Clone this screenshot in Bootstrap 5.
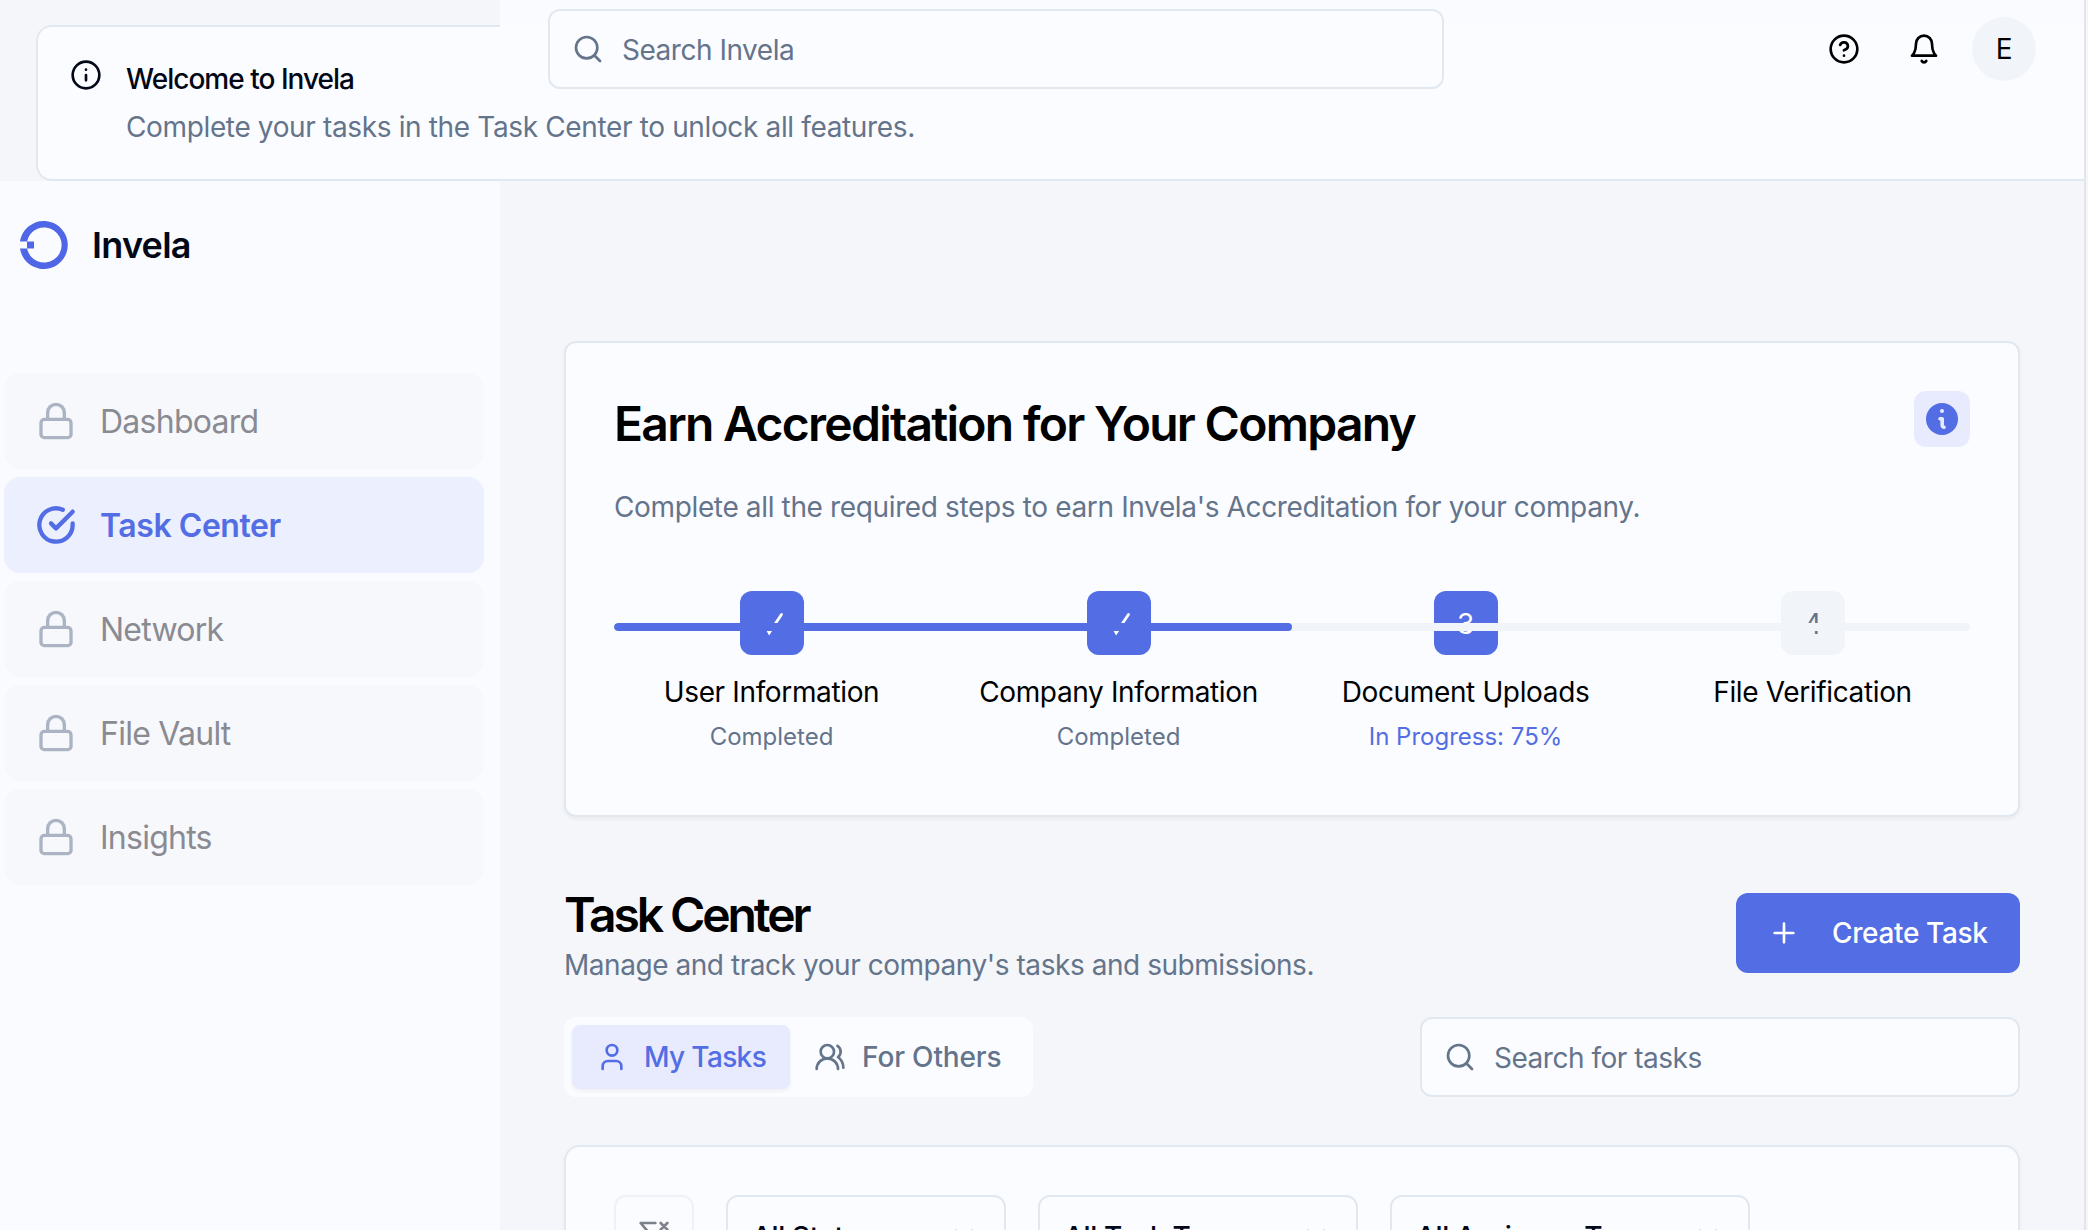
<!DOCTYPE html>
<html lang="en">
<head>
<meta charset="utf-8">
<title>Invela</title>
<link href="https://cdn.jsdelivr.net/npm/bootstrap@5.3.0/dist/css/bootstrap.min.css" rel="stylesheet">
<style>
:root{--brand:#536de4;--ink:#020817;--soft:#64748b;--line:#e2e8f0;--panel:#fbfcff;--page:#f5f6fa}
body{font-family:Inter,sans-serif;font-size:28px;line-height:40px;letter-spacing:-.36px;background:var(--page);color:#000;height:1230px;overflow:hidden;position:relative}
svg{flex:none;display:block}
.ic{width:32px;height:32px;fill:none;stroke:currentColor;stroke-width:2;stroke-linecap:round;stroke-linejoin:round}
.ic-lg{width:40px;height:40px}
.soft{color:var(--soft)}
.frame{width:2086px;height:1230px;overflow:hidden;border-right:2px solid #e5e5e7}
.notice-row{height:181px;padding:25px 0 0 36px}
.notice{height:156px;border:2px solid var(--line);border-right:0;border-radius:16px 0 0 16px;background:var(--panel);padding:32px 32px 0;gap:24px}
.notice h2{font-size:28px;font-weight:500;letter-spacing:-.98px;line-height:28px;color:var(--ink);margin:6px 0 14px}
.topbar{position:absolute;left:500px;top:0;width:1584px;height:98px;background:linear-gradient(#fafbff 25px,#fbfcff 25px);padding:9px 48px 0}
.field{height:80px;border:2px solid var(--line);border-radius:12px;background:var(--panel);padding:0 22px;gap:18px;letter-spacing:-.48px}
.field span{padding-top:2px}
.field.top{width:896px}
.field.tasks{width:600px}
.topicons{height:80px;gap:48px;color:#000}
.avatar{width:64px;height:64px;background:#f1f5f9;margin-left:-16px}
.side{width:500px;height:1049px;background:#fafbff;padding:36px 16px 0 4px}
.brandrow{gap:24px}
.brandname{font-size:36px;font-weight:600;color:var(--ink);letter-spacing:-.75px}
.nav-box{gap:8px;margin-top:100px}
.item{height:96px;border-radius:16px;background:#f7f8fc;padding:0 32px;gap:24px;font-size:32px;letter-spacing:-.75px;color:#8a8b92}
.item span{padding-top:2px}
.item svg{color:#abb4c3}
.item.on{background:#ebeffe;color:var(--brand);font-weight:600;letter-spacing:-.45px}
.item.on svg{color:var(--brand);stroke-width:2.6}
.content{width:1584px;padding:160px 64px 0}
.panel{border:2px solid var(--line);background:var(--panel);box-shadow:0 2px 4px rgba(0,0,0,.05)}
.accr{height:476px;border-radius:12px;padding:48px}
.accr h1{padding-top:5px}
.accr-desc{margin-top:35px}
.big{font-size:48px;line-height:56px;font-weight:600;letter-spacing:-1.72px;margin:0}
.big.tight{letter-spacing:-3.1px}
.tip{width:56px;height:56px;border-radius:12px;background:#e8ebfd}
.steps{gap:32px;margin-top:64px}
.track{position:absolute;left:0;right:0;top:32px;height:8px;border-radius:4px;background:#f1f5f9;overflow:hidden}
.track div{height:8px;border-radius:4px;background:var(--brand)}
.stp{flex:1 1 0;text-align:center}
.lbl{margin-top:17px}
.dot{width:64px;height:64px;border-radius:12px;background:var(--brand);color:#fff}
.dot.idle{background:#f1f5f9;color:var(--soft)}
.dot.num{padding-top:2px}
.dot path{fill:none;stroke:#fff;stroke-width:2.8;stroke-linecap:round}
.state{font-size:24px;line-height:32px;margin-top:9px;letter-spacing:0;color:var(--soft)}
.state.now{color:var(--brand)}
.headrow{margin-top:70px}
.headrow .soft{padding-top:2px;letter-spacing:-.45px}
.tabrow{margin-top:32px}
.tabs{height:80px;border-radius:12px;background:var(--panel);padding:8px}
.tab-b{height:64px;padding:0 24px;gap:16px;border-radius:8px;font-weight:500;letter-spacing:-.16px;color:var(--soft)}
.tab-b.on{background:#e8ebfd;color:var(--brand);letter-spacing:-.65px;box-shadow:0 2px 4px rgba(0,0,0,.06)}
.create{width:284px;height:80px;border-radius:12px;background:var(--brand);color:#fff;font-weight:500;letter-spacing:-.36px;padding:0 32px;gap:32px;margin-top:6px}
.filters{height:400px;border-radius:16px;padding:48px;gap:32px}
.sel{height:80px;border:2px solid var(--line);border-radius:12px;color:var(--ink);font-weight:500;padding:0 24px}
.sel span{padding-top:3px}
.sel svg{opacity:.5}
</style>
<script src="https://cdn.jsdelivr.net/npm/bootstrap@5.3.0/dist/js/bootstrap.bundle.min.js"></script>
</head>
<body>
<svg width="0" height="0" class="position-absolute">
<symbol id="lock" viewBox="0 0 24 24"><rect x="3" y="11" width="18" height="11" rx="2"/><path d="M7 11V7a5 5 0 0 1 10 0v4"/></symbol>
<symbol id="search" viewBox="0 0 24 24"><circle cx="11" cy="11" r="8"/><path d="m21 21-4.3-4.3"/></symbol>
<symbol id="down" viewBox="0 0 24 24"><path d="m6 9 6 6 6-6"/></symbol>
</svg>
<div class="frame">
  <div class="notice-row">
    <div class="notice d-flex">
      <svg class="ic" viewBox="0 0 24 24" color="#020817"><circle cx="12" cy="12" r="10"/><path d="M12 16v-4M12 8h.01"/></svg>
      <div><h2>Welcome to Invela</h2><div class="soft">Complete your tasks in the Task Center to unlock all features.</div></div>
    </div>
  </div>
  <header class="topbar d-flex justify-content-between">
    <div class="field top d-flex align-items-center soft"><svg class="ic"><use href="#search"/></svg><span>Search Invela</span></div>
    <div class="topicons d-flex align-items-center">
      <svg class="ic" viewBox="0 0 24 24"><circle cx="12" cy="12" r="10"/><path d="M9.09 9a3 3 0 0 1 5.83 1c0 2-3 3-3 3M12 17h.01"/></svg>
      <svg class="ic" viewBox="0 0 24 24"><path d="M6 8a6 6 0 0 1 12 0c0 7 3 9 3 9H3s3-2 3-9M10.3 21a1.94 1.94 0 0 0 3.4 0"/></svg>
      <div class="avatar rounded-circle d-flex align-items-center justify-content-center">E</div>
    </div>
  </header>
  <div class="d-flex">
    <aside class="side">
      <div class="brandrow d-flex align-items-center ps-3">
        <svg width="48" height="56" viewBox="0 -4 48 56"><path d="M0 20.5A24 24 0 1 1 0 27.5H7A17.5 17.5 0 1 0 7 20.5Z" fill="#4f66e6"/><path d="M7 20.5h7v7H7z" fill="#4f66e6"/></svg>
        <span class="brandname">Invela</span>
      </div>
      <nav class="nav-box d-flex flex-column">
        <div class="item d-flex align-items-center"><svg class="ic ic-lg"><use href="#lock"/></svg><span>Dashboard</span></div>
        <div class="item on d-flex align-items-center"><svg class="ic ic-lg" viewBox="0 0 24 24"><path d="M22 11.08V12a10 10 0 1 1-5.93-9.14"/><path d="M22 4 12 14.01l-3-3"/></svg><span>Task Center</span></div>
        <div class="item d-flex align-items-center"><svg class="ic ic-lg"><use href="#lock"/></svg><span>Network</span></div>
        <div class="item d-flex align-items-center"><svg class="ic ic-lg"><use href="#lock"/></svg><span>File Vault</span></div>
        <div class="item d-flex align-items-center"><svg class="ic ic-lg"><use href="#lock"/></svg><span>Insights</span></div>
      </nav>
    </aside>
    <main class="content">
      <section class="panel accr">
        <div class="d-flex justify-content-between align-items-start">
          <h1 class="big">Earn Accreditation for Your Company</h1>
          <div class="tip d-flex align-items-center justify-content-center"><svg width="32" height="32" viewBox="0 0 32 32"><circle cx="16" cy="16" r="16" fill="#536de4"/><circle cx="16" cy="8" r="2" fill="#e8ebfd"/><path d="M14 15.7h2.2v6.3q0 2 1.8 2.2" fill="none" stroke="#e8ebfd" stroke-width="3.6" stroke-linecap="round" stroke-linejoin="round"/></svg></div>
        </div>
        <div class="soft accr-desc">Complete all the required steps to earn Invela's Accreditation for your company.</div>
        <div class="steps d-flex position-relative">
          <div class="stp"><div class="dot mx-auto"><svg width="64" height="64" viewBox="0 0 64 64"><path d="m25 34 4.200 7.700L41.500 23.500M27.500 38.500l1.700 2.500 2-2.500"/></svg></div><div class="lbl">User Information</div><div class="state">Completed</div></div>
          <div class="stp"><div class="dot mx-auto"><svg width="64" height="64" viewBox="0 0 64 64"><path d="m25 34 4.200 7.700L41.500 23.500M27.500 38.500l1.700 2.500 2-2.500"/></svg></div><div class="lbl">Company Information</div><div class="state">Completed</div></div>
          <div class="stp"><div class="dot num mx-auto d-flex align-items-center justify-content-center">3</div><div class="lbl">Document Uploads</div><div class="state now">In Progress: 75%</div></div>
          <div class="stp"><div class="dot num idle mx-auto d-flex align-items-center justify-content-center">4</div><div class="lbl">File Verification</div></div>
          <div class="track"><div style="width:50%"></div></div>
        </div>
      </section>
      <div class="headrow d-flex justify-content-between align-items-start">
        <div><h2 class="big tight">Task Center</h2><div class="soft">Manage and track your company's tasks and submissions.</div></div>
        <button class="create border-0 d-flex align-items-center"><svg class="ic" viewBox="0 0 24 24"><path d="M5 12h14M12 5v14"/></svg><span class="text-nowrap">Create Task</span></button>
      </div>
      <div class="tabrow d-flex justify-content-between">
        <div class="tabs d-flex">
          <div class="tab-b on d-flex align-items-center"><svg class="ic" viewBox="0 0 24 24"><path d="M19 21v-2a4 4 0 0 0-4-4H9a4 4 0 0 0-4 4v2"/><circle cx="12" cy="7" r="4"/></svg><span>My Tasks</span></div>
          <div class="tab-b d-flex align-items-center"><svg class="ic" viewBox="0 0 24 24"><path d="M18 21a8 8 0 0 0-16 0"/><circle cx="10" cy="8" r="5"/><path d="M22 20c0-3.370-2-6.500-4-8a5 5 0 0 0-.45-8.300"/></svg><span>For Others</span></div>
        </div>
        <div class="field tasks d-flex align-items-center soft"><svg class="ic"><use href="#search"/></svg><span>Search for tasks</span></div>
      </div>
      <section class="panel filters d-flex mt-5">
        <div class="sel d-flex align-items-center justify-content-center p-0 opacity-50" style="width:80px"><svg class="ic opacity-100" viewBox="0 0 24 24"><path d="M13 3H2l8 9.460V19l4 2v-8.540l.9-1.050M22 3l-5 5M17 3l5 5"/></svg></div>
        <div class="sel d-flex align-items-center justify-content-between" style="width:280px"><span>All Statuses</span><svg class="ic"><use href="#down"/></svg></div>
        <div class="sel d-flex align-items-center justify-content-between" style="width:320px"><span>All Task Types</span><svg class="ic"><use href="#down"/></svg></div>
        <div class="sel d-flex align-items-center justify-content-between" style="width:360px"><span>All Assignee Types</span><svg class="ic"><use href="#down"/></svg></div>
      </section>
    </main>
  </div>
</div>
</body>
</html>
